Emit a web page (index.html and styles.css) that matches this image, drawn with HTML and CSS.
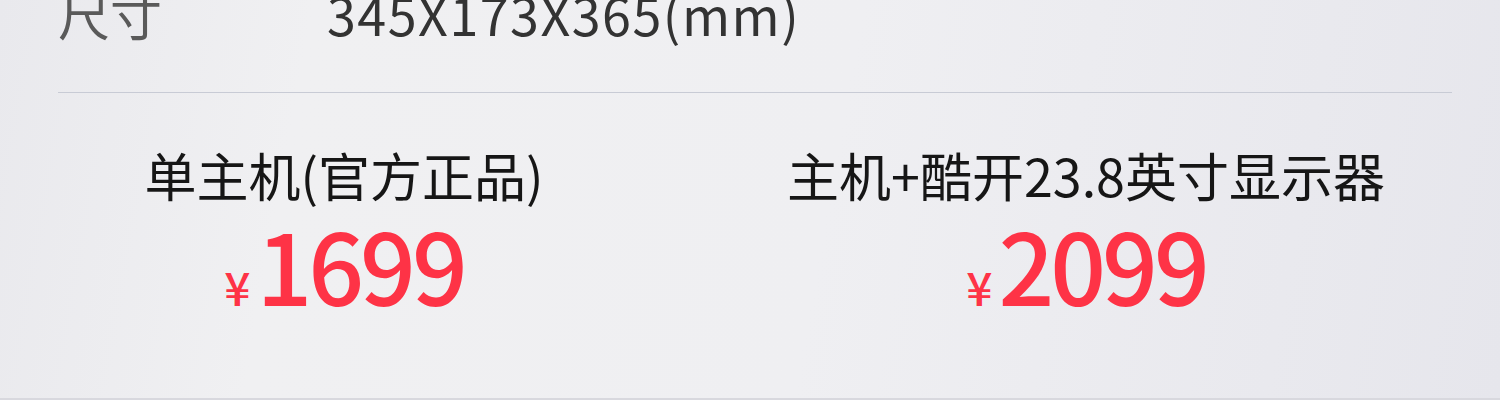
FILE: index.html
```html
<!DOCTYPE html>
<html lang="zh-CN">
<head>
<meta charset="utf-8">
<link rel="stylesheet" href="styles.css">
</head>
<body>
<div class="card">
  <div class="spec">
    <span class="spec-label">尺寸</span>
    <span class="spec-value">345X173X365(mm)</span>
  </div>
  <div class="divider"></div>
  <div class="options">
    <div class="option">
      <div class="option-name">单主机(官方正品)</div>
      <div class="option-price"><span class="yen">¥</span><span class="amount">1699</span></div>
    </div>
    <div class="option">
      <div class="option-name">主机+酷开23.8英寸显示器</div>
      <div class="option-price"><span class="yen">¥</span><span class="amount">2099</span></div>
    </div>
  </div>
</div>
</body>
</html>
```

FILE: styles.css
```css
html, body {
  margin: 0;
  padding: 0;
}
body {
  width: 1500px;
  height: 400px;
  overflow: hidden;
  font-family: "Noto Sans CJK SC", "Noto Sans", sans-serif;
}
.card {
  height: 400px;
  box-sizing: border-box;
  background: linear-gradient(100deg, #e9e9ed 0%, #f0f0f2 20%, #efeff2 55%, #e6e6ec 100%);
  border-bottom: 2px solid #d8d8de;
  overflow: hidden;
}
.spec {
  display: flex;
  align-items: baseline;
  padding-left: 58px;
  margin-top: -26px;
  height: 80px;
  line-height: 80px;
}
.spec-label {
  width: 269px;
  font-size: 52px;
  color: #5a5a5a;
}
.spec-value {
  font-size: 52px;
  letter-spacing: 1.5px;
  color: #333;
}
.divider {
  margin: 38px 48px 0 58px;
  height: 1px;
  background: #c8cbd5;
}
.options {
  display: grid;
  grid-template-columns: 688px 796px;
  padding-top: 50px;
}
.option {
  display: flex;
  flex-direction: column;
  align-items: center;
}
.option-name {
  font-size: 52px;
  line-height: 64px;
  color: #161616;
}
.option-price {
  display: flex;
  align-items: baseline;
  color: #fe3346;
  line-height: 100px;
  margin-top: 6px;
}
.yen {
  font-size: 46px;
  font-weight: 500;
  margin-right: 6px;
}
.amount {
  font-size: 98px;
  font-weight: 500;
  letter-spacing: -4px;
}
```
